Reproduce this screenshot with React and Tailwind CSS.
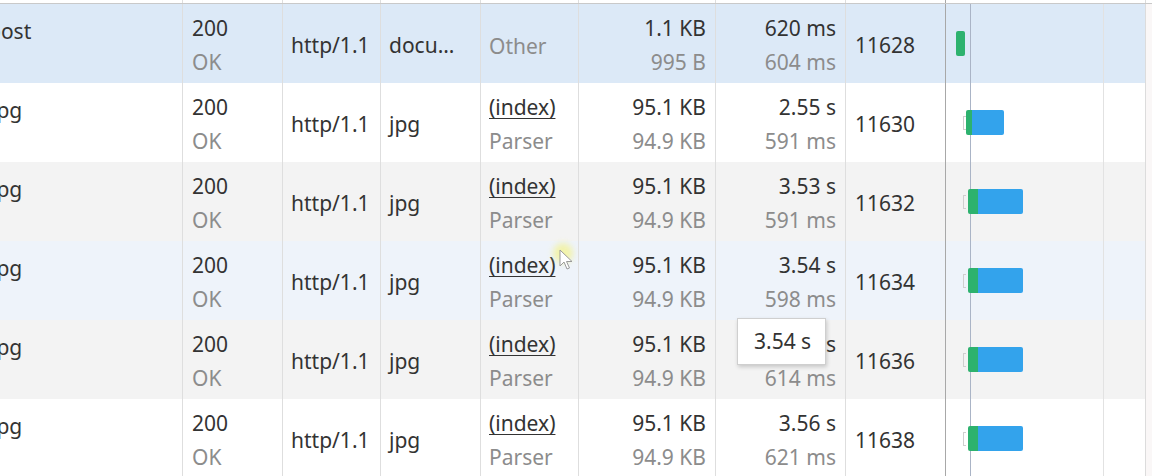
import React from 'react';

const rows = [
  { name: 'post', shift: -12, type: 'docu…', init: 'Other', init2: null, size: '1.1 KB', size2: '995 B', time: '620 ms', time2: '604 ms', conn: '11628', bg: 'bg-[#dce9f7]', bar: 'doc' },
  { name: 'jpg', shift: -9, type: 'jpg', init: '(index)', init2: 'Parser', size: '95.1 KB', size2: '94.9 KB', time: '2.55 s', time2: '591 ms', conn: '11630', bg: 'bg-white', bar: 'short' },
  { name: 'jpg', shift: -9, type: 'jpg', init: '(index)', init2: 'Parser', size: '95.1 KB', size2: '94.9 KB', time: '3.53 s', time2: '591 ms', conn: '11632', bg: 'bg-[#f3f3f3]', bar: 'long' },
  { name: 'jpg', shift: -9, type: 'jpg', init: '(index)', init2: 'Parser', size: '95.1 KB', size2: '94.9 KB', time: '3.54 s', time2: '598 ms', conn: '11634', bg: 'bg-[#eef3fa]', bar: 'long' },
  { name: 'jpg', shift: -9, type: 'jpg', init: '(index)', init2: 'Parser', size: '95.1 KB', size2: '94.9 KB', time: '3.55 s', time2: '614 ms', conn: '11636', bg: 'bg-[#f3f3f3]', bar: 'long', tooltip: true },
  { name: 'jpg', shift: -9, type: 'jpg', init: '(index)', init2: 'Parser', size: '95.1 KB', size2: '94.9 KB', time: '3.56 s', time2: '621 ms', conn: '11638', bg: 'bg-white', bar: 'long' },
];

const Bar = ({ kind }) => {
  if (kind === 'doc') {
    return <div className="absolute left-[10px] top-[27px] h-[25px] w-[9px] rounded-[2px] bg-[#2db26e]" />;
  }
  const blueEnd = kind === 'short' ? 58 : 77;
  const greenStart = kind === 'short' ? 20 : 22;
  return (
    <>
      <div className="absolute left-[17px] top-[33px] h-[14px] w-[3px] border-l border-y border-[#cfcfcf]" />
      <div
        className="absolute top-[27px] h-[25px] flex rounded-[2px] overflow-hidden"
        style={{ left: greenStart, width: blueEnd - greenStart }}
      >
        <div className={kind === 'short' ? 'w-[6px] bg-[#2db26e]' : 'w-[10px] bg-[#2db26e]'} />
        <div className="flex-1 bg-[#33a3ec]" />
      </div>
    </>
  );
};

const Row = ({ r }) => (
  <div className={`relative flex h-[79px] ${r.bg}`}>
    <div className="w-[183px] shrink-0 border-r border-[#dedede] overflow-hidden pt-[10px] leading-[34px]">
      <span className="block whitespace-nowrap" style={{ marginLeft: r.shift }}>{r.name}</span>
    </div>
    <div className="w-[100px] shrink-0 border-r border-[#dedede] pl-[9px] pt-[7px] leading-[34px]">
      <div>200</div>
      <div className="text-[#8c8c8c]">OK</div>
    </div>
    <div className="w-[98px] shrink-0 border-r border-[#dedede] pl-[8px] flex items-center pt-[4px]">http/1.1</div>
    <div className="w-[100px] shrink-0 border-r border-[#dedede] pl-[8px] flex items-center pt-[4px]">{r.type}</div>
    <div className="w-[98px] shrink-0 border-r border-[#dedede] pl-[8px] leading-[34px]">
      {r.init2 ? (
        <div className="pt-[7px]">
          <div className="underline underline-offset-[3px] decoration-1">{r.init}</div>
          <div className="text-[#8c8c8c]">{r.init2}</div>
        </div>
      ) : (
        <div className="h-full flex items-center pt-[4px] text-[#8c8c8c]">{r.init}</div>
      )}
    </div>
    <div className="w-[137px] shrink-0 border-r border-[#dedede] pr-[9px] pt-[7px] leading-[34px] text-right">
      <div>{r.size}</div>
      <div className="text-[#8c8c8c]">{r.size2}</div>
    </div>
    <div className="w-[130px] shrink-0 border-r border-[#dedede] pr-[9px] pt-[7px] leading-[34px] text-right">
      <div>{r.time}</div>
      <div className="text-[#8c8c8c]">{r.time2}</div>
    </div>
    <div className="w-[100px] shrink-0 border-r border-[#a8a8a8] pl-[9px] flex items-center pt-[4px]">{r.conn}</div>
    <div className="relative w-[200px] shrink-0 border-r border-[#dcdcdc]">
      <div className="absolute left-[24px] top-0 bottom-0 w-px bg-[#aab4c6]" />
      <div className="absolute left-[157px] top-0 bottom-0 w-px bg-[#e2e2e2]" />
      <Bar kind={r.bar} />
    </div>
    <div className="flex-1 bg-[#faf7f7]" />
    {r.tooltip && (
      <div className="absolute left-[737px] top-[-2px] w-[89px] h-[47px] bg-white border border-[#cfcfcf] shadow-[1px_2px_4px_rgba(0,0,0,0.18)] flex items-center pl-[16px] text-[#333]">
        3.54 s
      </div>
    )}
  </div>
);

const Cursor = () => (
  <div className="absolute left-[559px] top-[249px] pointer-events-none">
    <div className="absolute left-[-6px] top-[-6px] w-[20px] h-[20px] rounded-full bg-[#f4f38a] opacity-70 blur-[3px]" />
    <svg className="relative" width="14" height="22" viewBox="0 0 14 22">
      <path d="M1 1 L1 17 L5 13 L8 20 L10.5 19 L7.5 12.5 L13 12.5 Z" fill="#ffffff" stroke="#9a9a9a" strokeWidth="1" strokeLinejoin="round" />
    </svg>
  </div>
);

export default function App() {
  return (
    <div className="relative w-[1152px] h-[476px] overflow-hidden bg-white text-[21px] text-[#333] font-['Noto_Sans',sans-serif]">
      <div className="flex h-[4px] border-b border-[#c9c9c9]">
        <div className="w-[183px] border-r border-[#dedede]" />
        <div className="w-[100px] border-r border-[#dedede]" />
        <div className="w-[98px] border-r border-[#dedede]" />
        <div className="w-[100px] border-r border-[#dedede]" />
        <div className="w-[98px] border-r border-[#dedede]" />
        <div className="w-[137px] border-r border-[#dedede]" />
        <div className="w-[130px] border-r border-[#dedede]" />
        <div className="w-[100px] border-r border-[#a8a8a8]" />
        <div className="w-[200px] border-r border-[#dcdcdc]" />
      </div>
      {rows.map((r) => (
        <Row key={r.conn} r={r} />
      ))}
      <Cursor />
    </div>
  );
}
